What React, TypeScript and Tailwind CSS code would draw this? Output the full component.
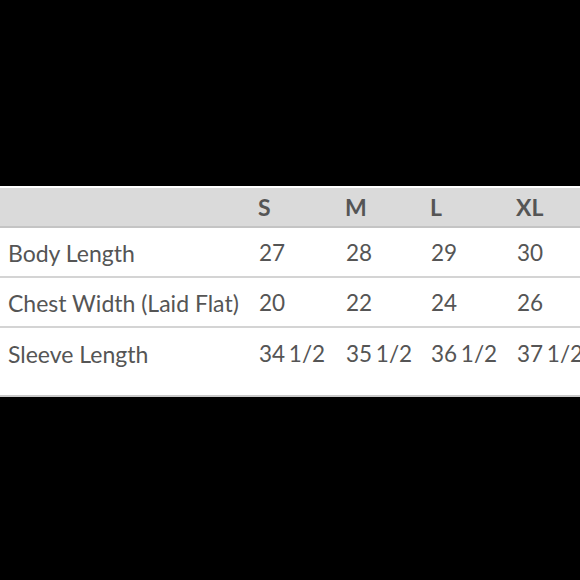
const sizes = ["S", "M", "L", "XL"];

const rows = [
  { label: "Body Length", values: ["27", "28", "29", "30"] },
  { label: "Chest Width (Laid Flat)", values: ["20", "22", "24", "26"] },
  { label: "Sleeve Length", values: ["34 1/2", "35 1/2", "36 1/2", "37 1/2"] },
];

const cols = "grid grid-cols-[258px_87px_85px_86px_86px] items-center";

export default function App() {
  return (
    <div className="h-[580px] w-[580px] overflow-hidden bg-black pt-[186px] font-['Lato',sans-serif] text-[23px] text-[#555555]">
      <div className="w-[580px] overflow-hidden whitespace-nowrap border-b-2 border-[#c9c9c9] bg-white">
        <div className={`${cols} mt-[2px] h-[40px] border-b-2 border-[#c4c4c4] bg-[#dadada] pt-[1px] font-bold`}>
          <div />
          {sizes.map((s) => (
            <div key={s}>{s}</div>
          ))}
        </div>
        {rows.map((row, i) => (
          <div
            key={row.label}
            className={`${cols} h-[50px] pt-[2px] ${i < rows.length - 1 ? "border-b-2 border-[#d4d4d4]" : ""}`}
          >
            <div className="pl-2">{row.label}</div>
            {row.values.map((v, j) => (
              <div key={j} className="pl-px text-[22.5px] [word-spacing:-2px]">
                {v}
              </div>
            ))}
          </div>
        ))}
        <div className="h-[17px]" />
      </div>
    </div>
  );
}
